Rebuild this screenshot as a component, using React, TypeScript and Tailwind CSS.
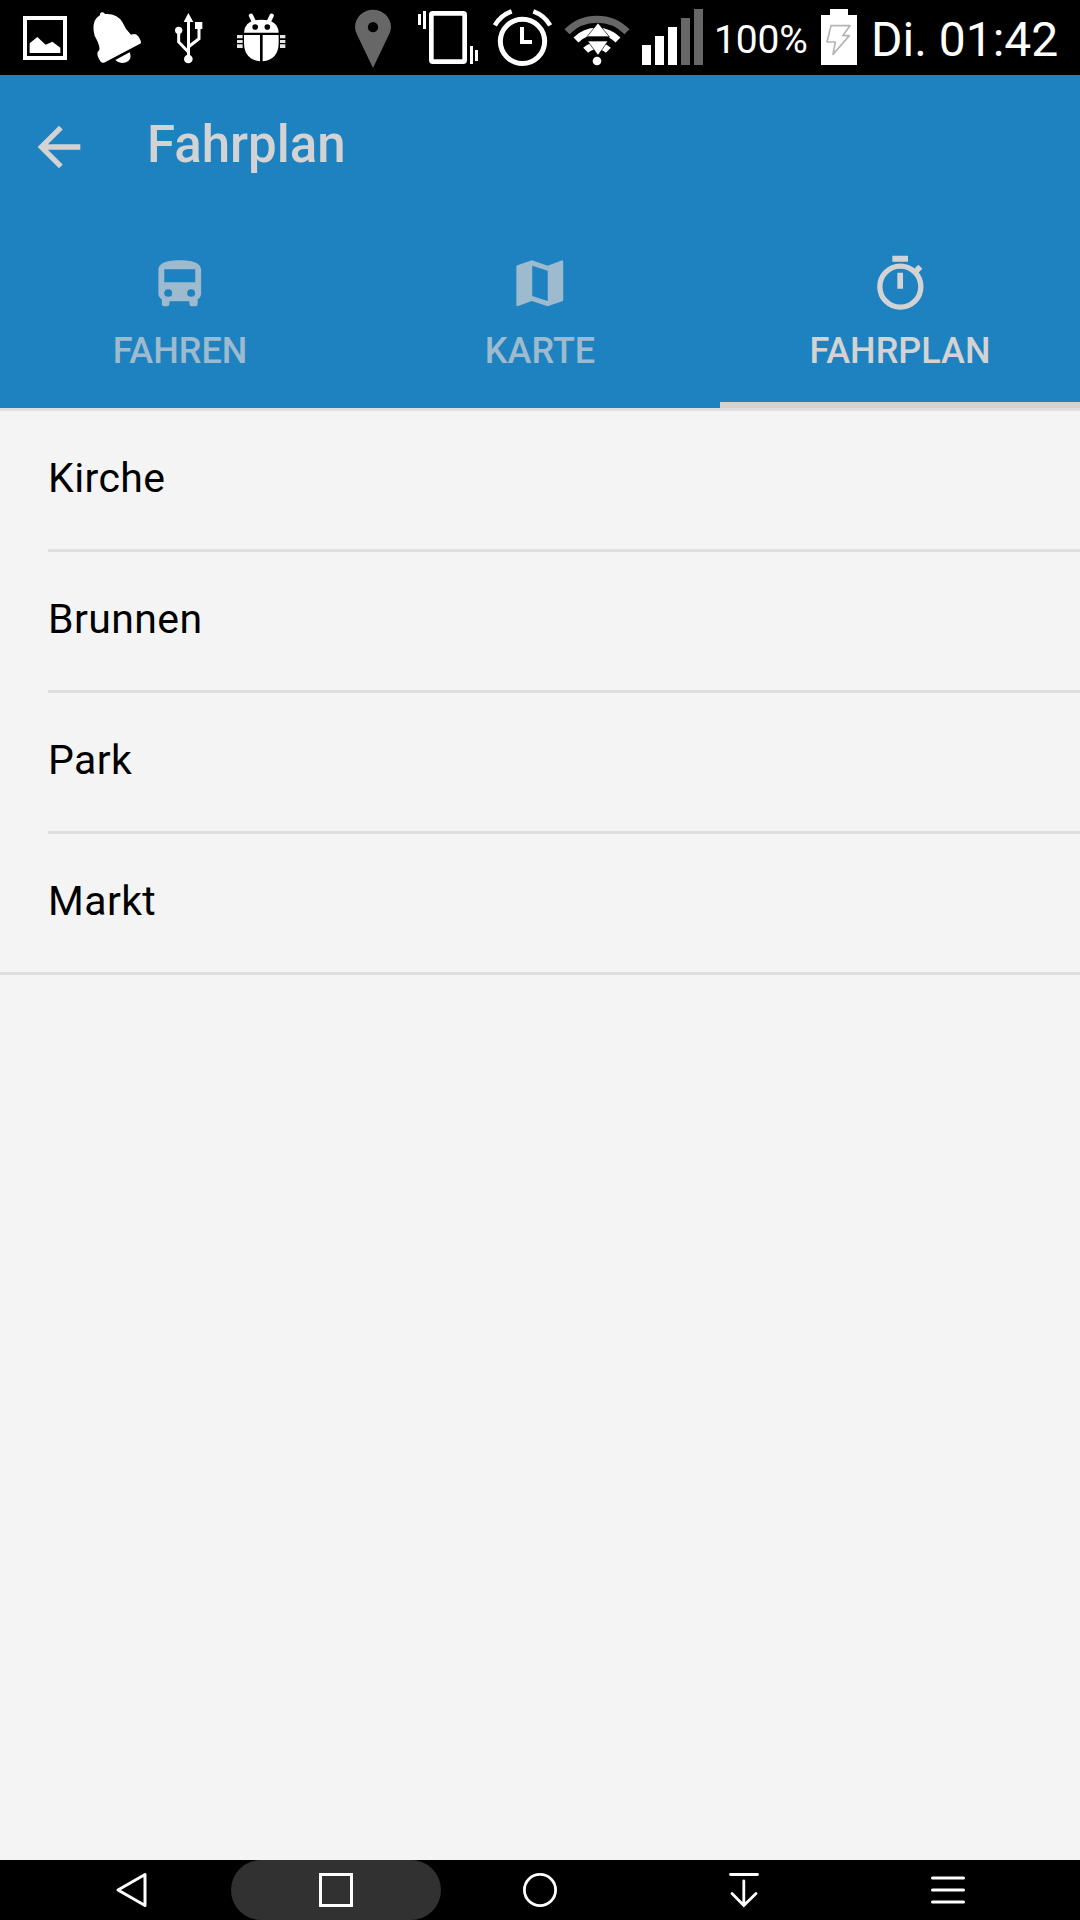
import type { ReactNode } from "react";

/* Status bar glyph: a 75px high slice of the bar, drawn in third-pixel units. */
function StatusIcon({ box, className, children }: { box: string; className: string; children: ReactNode }) {
  return (
    <svg viewBox={box} className={`h-[75px] shrink-0 ${className}`} fill="#fff">
      {children}
    </svg>
  );
}

function StatusBar() {
  return (
    <header className="flex h-[75px] items-start bg-black text-white">
      <StatusIcon box="0 0 240 225" className="w-[80px]">
        <path d="M75 54H195V174H75Z" fill="none" stroke="#fff" strokeWidth="12" />
        <path d="M89 159V130L112 111L137 134L157 125L181 143V159Z" />
      </StatusIcon>
      <StatusIcon box="240 0 225 225" className="w-[75px]">
        <path d="M300 46Q299 37 307 37Q313 37 315 42Q350 39 367 66Q376 88 393 104Q406 98 414 108Q424 122 423 130L312 188Q306 190 301 184Q289 164 293 155Q300 152 298 142Q296 128 284 108Q272 62 300 46Z" />
        <path d="M346 180L389 157Q395 170 388 180Q380 189 366 189Q352 187 346 180Z" />
      </StatusIcon>
      <StatusIcon box="465 0 195 225" className="w-[65px]">
        <path d="M565 39L580 66H551Z" />
        <circle cx="565" cy="177" r="13" />
        <circle cx="536" cy="91" r="11" />
        <path d="M585 66H607V87H585Z" />
        <path d="M565.500 60V177M536 91V126L565 156M597 87V116L565 141" fill="none" stroke="#fff" strokeWidth="9" />
      </StatusIcon>
      <StatusIcon box="660 0 360 225" className="w-[120px]">
        <path d="M753 47L763 68M815 47L805 68" stroke="#fff" strokeWidth="13" strokeLinecap="round" />
        <path d="M732 98Q734 59 784 59Q834 59 836 98Z" />
        <circle cx="765.500" cy="81" r="8.500" fill="#000" />
        <circle cx="802" cy="81" r="8.500" fill="#000" />
        <path d="M732 105H780V184Q732 178 732 128ZM788 105H836V128Q836 178 788 184Z" />
        <path d="M711 105H728V115H711ZM711 120H728V129H711ZM711 133H728V144H711ZM840 105H856V115H840ZM840 120H856V129H840ZM840 133H856V144H840Z" opacity="0.9" />
      </StatusIcon>
      <StatusIcon box="0 0 195 225" className="w-[65px]">
        <path fillRule="evenodd" fill="#676767" d="M99 204L52 106Q45 94 45 82A54 53 0 0 1 153 82Q153 94 146 106ZM99 66A15 15 0 1 0 99 97A15 15 0 1 0 99 66Z" />
      </StatusIcon>
      <StatusIcon box="195 0 240 225" className="w-[80px]">
        <rect x="274" y="40" width="100" height="145" rx="4" fill="none" stroke="#fff" strokeWidth="14" />
        <path d="M234 42H243V75H234ZM249 33H258V87H249ZM390 138H399V192H390ZM405 150H414V183H405Z" />
      </StatusIcon>
      <StatusIcon box="435 0 225 225" className="w-[75px]">
        <g fill="none" stroke="#fff">
          <circle cx="547.500" cy="124" r="66.500" strokeWidth="15" />
          <path d="M464.500 76A96 96 0 0 1 515 34M580 34A96 96 0 0 1 630.500 76" strokeWidth="14" />
        </g>
        <path d="M540 81H552V120H576V132H540Z" />
      </StatusIcon>
      <StatusIcon box="660 0 210 225" className="w-[70px]">
        <g fill="none">
          <path d="M681 95A127 127 0 0 1 861 95" stroke="#676767" strokeWidth="21" />
          <path d="M708 120A89 89 0 0 1 834 120" stroke="#fff" strokeWidth="21" />
          <path d="M737 151A48 48 0 0 1 805 151" stroke="#fff" strokeWidth="21" />
        </g>
        <path d="M742 110H808V123H742Z" fill="#000" />
        <path d="M774 69L808 110H741ZM743 123H804L774 166Z" stroke="#000" strokeWidth="2" />
        <circle cx="771" cy="183" r="13" />
      </StatusIcon>
      <StatusIcon box="0 0 249 225" className="w-[83px]">
        <path d="M36 135H63V195H36ZM75 108H102V195H75ZM114 81H141V195H114Z" />
        <path d="M153 54H180V195H153ZM192 27H219V195H192Z" fill="#676767" />
      </StatusIcon>
      <span className="w-[100px] pt-[16px] pl-px text-[39px] leading-[48px] tracking-[-0.2px]">100%</span>
      <StatusIcon box="39 0 159 225" className="w-[53px]">
        <path d="M63 45H90V27H144V45H171V195H63Z" />
        <path d="M93 77H150L128 107H148L99 163L106 126H81Z" fill="none" stroke="#b5b5b5" strokeWidth="5" strokeLinejoin="round" />
      </StatusIcon>
      <span className="pt-[10px] pl-[5px] text-[48px] leading-[60px] whitespace-nowrap">Di. 01:42</span>
    </header>
  );
}

function BusIcon() {
  return (
    <svg viewBox="196 86 132 146" preserveAspectRatio="none" className="h-[48.700px] w-[45.500px]" fill="currentColor">
      <path
        fillRule="evenodd"
        d="M200 120C200 96 230 90 262 90S324 96 324 120V190Q324 200 314 207V221Q314 228 308 228H297Q290 228 290 221V213H232V221Q232 228 225 228H217Q210 228 210 221V207Q200 200 200 190ZM217 117V156H307V117ZM228.500 176.500A11.500 11.500 0 1 0 228.500 199.500A11.500 11.500 0 1 0 228.500 176.500ZM295 176.500A11.500 11.500 0 1 0 295 199.500A11.500 11.500 0 1 0 295 176.500Z"
      />
    </svg>
  );
}

function MapIcon() {
  return (
    <svg viewBox="1236 86 144 146" preserveAspectRatio="none" className="h-[48.700px] w-[49.600px]" fill="currentColor">
      <path
        fillRule="evenodd"
        d="M1240 109Q1240 106 1243 105L1285 90L1331 106L1373 90Q1376 90 1376 93V209Q1376 212 1373 213L1331 228L1285 212L1243 228Q1240 228 1240 225ZM1286 106V197L1331 212V121Z"
      />
    </svg>
  );
}

function StopwatchIcon() {
  return (
    <svg viewBox="525 73 152 172" className="h-[57.300px] w-[50.700px]" fill="currentColor">
      <path d="M577 78H624V96H577ZM592 129H609V177H592ZM643 117L655 105L667 117L655 130Z" />
      <circle cx="601" cy="171" r="61.500" fill="none" stroke="currentColor" strokeWidth="16" />
    </svg>
  );
}

const tabs = [
  { label: "FAHREN", icon: <BusIcon />, active: false },
  { label: "KARTE", icon: <MapIcon />, active: false },
  { label: "FAHRPLAN", icon: <StopwatchIcon />, active: true },
];

const stops = ["Kirche", "Brunnen", "Park", "Markt"];

export default function App() {
  return (
    <div className="flex h-[1920px] w-[1080px] flex-col overflow-hidden bg-[#f4f4f4] font-['Roboto',sans-serif]">
      <StatusBar />

      <div className="flex h-[336px] flex-col border-b-[3px] border-[#dedede] bg-[#1f82c0] text-[#d3d3d3]">
        <div className="flex h-[144px] items-center pl-[27px]">
          <svg viewBox="0 0 24 24" className="size-[64px]" fill="currentColor">
            <path d="M20 11H7.830l5.590-5.590L12 4l-8 8 8 8 1.410-1.410L7.830 13H20v-2z" />
          </svg>
          <h1 className="pb-[4px] pl-[56px] text-[51px] leading-[60px] font-medium">Fahrplan</h1>
        </div>
        <nav className="grid flex-1 grid-cols-3">
          {tabs.map((tab) => (
            <div
              key={tab.label}
              className={
                tab.active
                  ? "flex flex-col items-center border-b-[6px] border-[#d3d3d3]"
                  : "flex flex-col items-center border-b-[6px] border-transparent text-[#9dbace]"
              }
            >
              <div className="flex h-[103px] items-end">
                <div className="flex h-[78px] items-center">{tab.icon}</div>
              </div>
              <span className="mt-[7px] text-[36px] leading-[44px] font-medium">{tab.label}</span>
            </div>
          ))}
        </nav>
      </div>

      <ul className="flex-1">
        {stops.map((stop) => (
          <li key={stop} className="group pl-12 last:border-b-[3px] last:border-[#dedede]">
            <div className="flex h-[141px] items-center border-b-[3px] border-[#dedede] pb-[2px] text-[41px] tracking-[0.4px] text-black group-last:h-[138px] group-last:border-b-0">
              {stop}
            </div>
          </li>
        ))}
      </ul>

      <footer className="flex h-[60px] items-center bg-black px-[30px]">
        <div className="flex w-[201px] justify-center">
          <svg viewBox="0 0 60 60" className="size-[60px]" fill="none" stroke="#fff" strokeWidth="3" strokeLinejoin="round">
            <path d="M17 30L44 14.500V45.500Z" />
          </svg>
        </div>
        <div className="flex w-[210px] justify-center rounded-full bg-[#313131]">
          <svg viewBox="0 0 60 60" className="size-[60px]" fill="none" stroke="#fff" strokeWidth="3">
            <path d="M14.500 14.500H45.500V45.500H14.500Z" />
          </svg>
        </div>
        <div className="flex w-[198px] justify-center">
          <svg viewBox="0 0 60 60" className="size-[60px]" fill="none" stroke="#fff" strokeWidth="2.800">
            <circle cx="30" cy="30" r="15.600" />
          </svg>
        </div>
        <div className="flex w-[210px] justify-center">
          <svg viewBox="0 0 60 60" className="size-[60px]" fill="none" stroke="#fff" strokeWidth="2.800" strokeLinecap="round">
            <path d="M16.500 14.500H43.500M29.800 21V45M18 33.500L29.800 45.500L42 33.500" />
          </svg>
        </div>
        <div className="flex w-[198px] justify-center">
          <svg viewBox="0 0 60 60" className="size-[60px]" fill="none" stroke="#fff" strokeWidth="3" strokeLinecap="round">
            <path d="M14.500 18H45.500M14.500 30H45.500M14.500 42H45.500" />
          </svg>
        </div>
      </footer>
    </div>
  );
}
